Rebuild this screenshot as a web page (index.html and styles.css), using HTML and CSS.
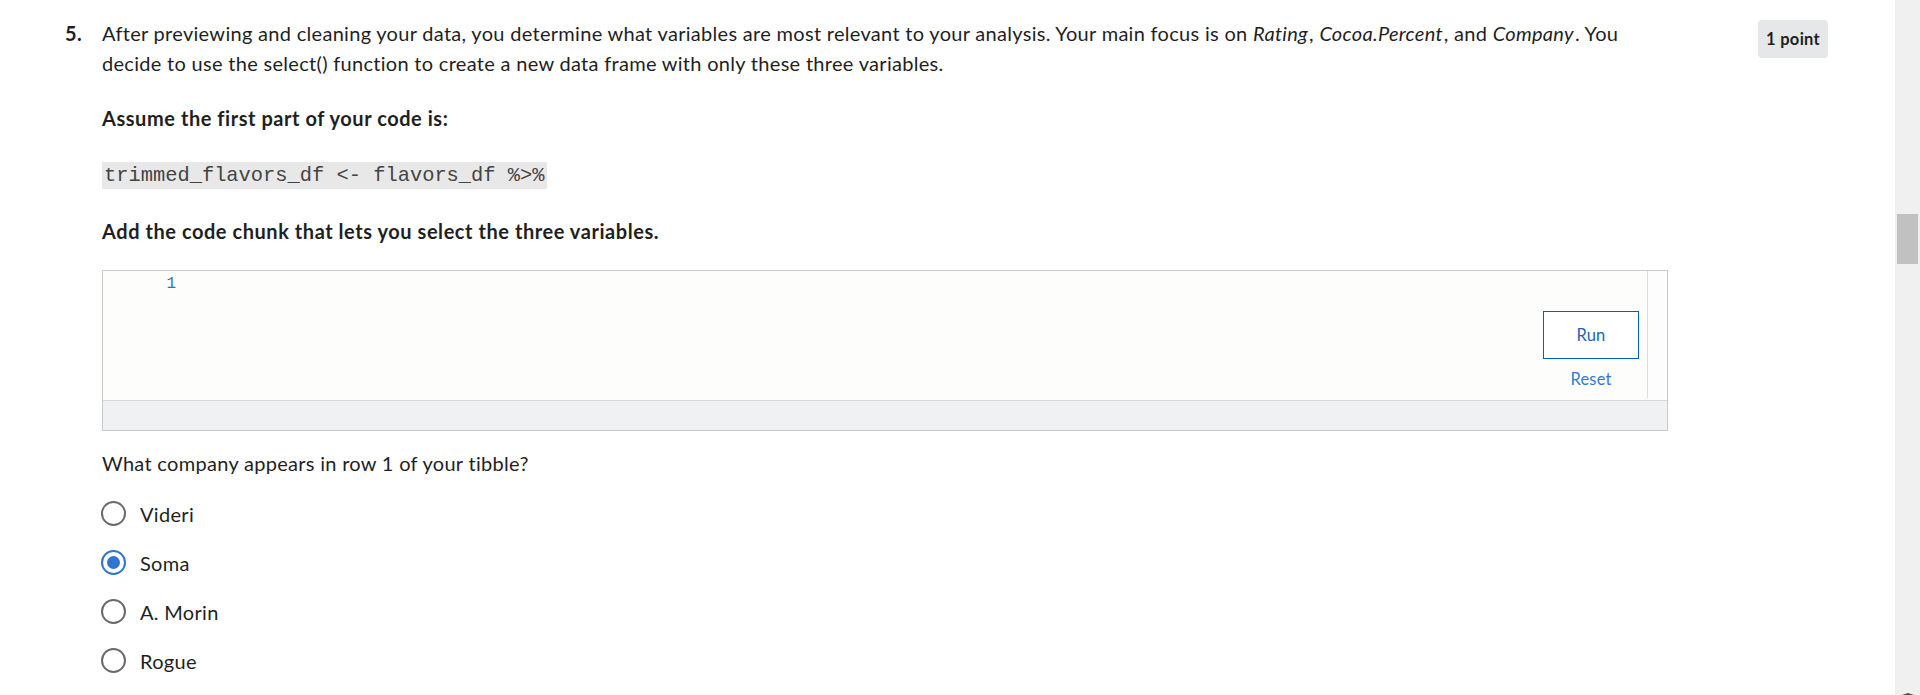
FILE: index.html
```html
<!DOCTYPE html>
<html lang="en">
<head>
<meta charset="utf-8">
<title>Quiz question 5</title>
<link rel="stylesheet" href="styles.css">
</head>
<body>
<div class="screen">
  <main class="page">
    <section class="question">
      <div class="qnum">5.</div>
      <div class="qbody">
        <p class="prompt">After previewing and cleaning your data, you determine what variables are most relevant to your analysis. Your main focus is on <em>Rating</em>, <em>Cocoa.Percent</em>, and <em>Company</em>. You decide to use the select() function to create a new data frame with only these three variables.</p>
        <p class="strong">Assume the first part of your code is:</p>
        <p class="code-line"><code>trimmed_flavors_df &lt;- flavors_df %&gt;%</code></p>
        <p class="strong">Add the code chunk that lets you select the three variables.</p>
        <div class="editor">
          <div class="editor-main">
            <div class="gutter">1</div>
            <div class="code-area"></div>
            <div class="actions">
              <button class="run" type="button">Run</button>
              <button class="reset" type="button">Reset</button>
            </div>
            <div class="vscroll"></div>
          </div>
          <div class="editor-foot"></div>
        </div>
        <p class="sub">What company appears in row 1 of your tibble?</p>
        <div class="options">
          <label class="option"><span class="radio"></span><span class="label">Videri</span></label>
          <label class="option"><span class="radio checked"></span><span class="label">Soma</span></label>
          <label class="option"><span class="radio"></span><span class="label">A. Morin</span></label>
          <label class="option"><span class="radio"></span><span class="label">Rogue</span></label>
        </div>
      </div>
      <div class="points"><span class="badge">1 point</span></div>
    </section>
  </main>
  <div class="scrollbar">
    <div class="thumb"></div>
    <div class="arrow"></div>
  </div>
</div>
</body>
</html>
```

FILE: styles.css
```css
* { box-sizing: border-box; }

html, body {
  margin: 0;
  padding: 0;
  background: #ffffff;
}

body {
  font-family: Lato, "Open Sans", sans-serif;
  font-size: 20px;
  line-height: 30px;
  letter-spacing: 0.3px;
  color: #1f1f1f;
}

.screen {
  display: flex;
  width: 1920px;
  height: 695px;
  overflow: hidden;
}

.page {
  flex: 1;
  padding-top: 18px;
  padding-left: 65px;
}

.question {
  display: flex;
  align-items: flex-start;
}

.qnum {
  width: 37px;
  font-weight: 700;
  letter-spacing: 0.5px;
}

.qbody {
  width: 1566px;
}

.qbody p {
  margin: 0 0 25px 0;
}

.prompt {
  width: 1540px;
}

.prompt em {
  font-style: italic;
  padding-right: 1px;
}

.strong {
  font-weight: 700;
  letter-spacing: 0.55px;
}

.code-line code {
  font-family: "Liberation Mono", "Courier New", monospace;
  font-size: 20.4px;
  letter-spacing: 0;
  background: #e8e8e8;
  color: #444444;
  padding: 2px 2px;
}

.editor {
  border: 1px solid #c9c9c9;
  margin-top: -1px;
}

.editor-main {
  display: flex;
  height: 129px;
  background: #fdfdfb;
}

.gutter {
  width: 79px;
  text-align: right;
  padding-top: 3px;
  padding-right: 6px;
  font-family: "Liberation Mono", "Courier New", monospace;
  font-size: 16px;
  line-height: 20px;
  letter-spacing: 0;
  color: #2a7aa6;
}

.code-area {
  flex: 1;
}

.actions {
  display: flex;
  flex-direction: column;
  align-items: center;
  width: 96px;
  margin-right: 8px;
  padding-top: 40px;
}

.run {
  width: 96px;
  height: 48px;
  border: 1.5px solid #0b5bc4;
  background: #ffffff;
  color: #2463b0;
  font-family: Lato, "Open Sans", sans-serif;
  font-size: 16.5px;
  letter-spacing: 0.2px;
  cursor: pointer;
}

.reset {
  margin-top: 5px;
  border: 0;
  background: transparent;
  color: #2f7bd0;
  font-family: Lato, "Open Sans", sans-serif;
  font-size: 16.5px;
  letter-spacing: 0.2px;
  line-height: 30px;
  padding: 0;
}

.vscroll {
  width: 20px;
  border-left: 1px solid #dcdcdc;
  background: #fdfdfd;
  margin-bottom: 2px;
}

.editor-foot {
  height: 30px;
  border-top: 1px solid #d9d9d9;
  background: #f0f1f3;
}

.qbody .sub {
  margin: 17px 0 11px 0;
}

.options {
  display: flex;
  flex-direction: column;
}

.option {
  display: flex;
  align-items: center;
  height: 49px;
}

.radio {
  width: 25px;
  height: 25px;
  margin-left: -1px;
  border: 2.5px solid #6a6a6a;
  border-radius: 50%;
  margin-right: 14px;
  display: flex;
  align-items: center;
  justify-content: center;
}

.radio.checked {
  border-color: #2f74d0;
}

.radio.checked::after {
  content: "";
  width: 13px;
  height: 13px;
  border-radius: 50%;
  background: #2f74d0;
}

.points {
  margin-left: 90px;
  padding-top: 2px;
}

.badge {
  display: inline-block;
  height: 38px;
  padding: 0 8px;
  line-height: 38px;
  background: #e5e7e8;
  border-radius: 4px;
  font-size: 16.5px;
  font-weight: 700;
  letter-spacing: 0.3px;
  color: #1f1f1f;
  white-space: nowrap;
}

.scrollbar {
  width: 25px;
  height: 695px;
  background: #f0f0f0;
  display: flex;
  flex-direction: column;
  align-items: center;
  padding-top: 214px;
}

.thumb {
  width: 21px;
  height: 50px;
  background: #c1c1c1;
}

.arrow {
  margin-top: auto;
  width: 0;
  height: 0;
  border-left: 6px solid transparent;
  border-right: 6px solid transparent;
  border-bottom: 2px solid #505050;
}
```
